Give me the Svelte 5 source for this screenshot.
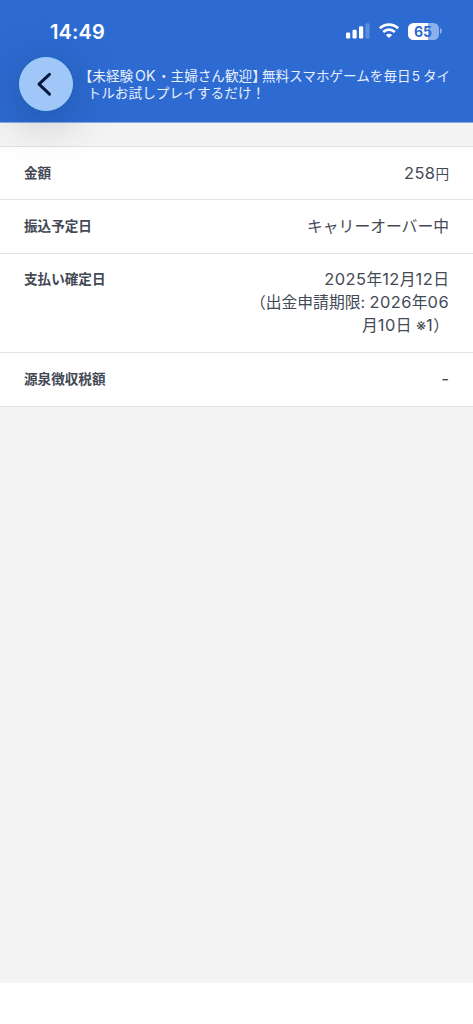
<script>
  const rows = [
    { label: '金額', lines: ['258'], unit: '円' },
    { label: '振込予定日', lines: ['キャリーオーバー中'] },
    { label: '支払い確定日', lines: ['2025年12月12日', '（出金申請期限: 2026年06', '月10日 ※1）'] },
    { label: '源泉徴収税額', lines: ['-'] }
  ];
  const split = (text) => text.match(/[\d-]+|[^\d-]+/g);
</script>

<div class="screen">
  <header>
    <div class="status">
      <span class="time">14:49</span>
      <div class="indicators">
        <svg width="24" height="16" viewBox="0 0 24 16" fill="#fff">
          <rect x="0" y="9.6" width="4.2" height="5.8" rx="1.2" />
          <rect x="6.5" y="6.8" width="4.2" height="8.6" rx="1.2" />
          <rect x="13" y="3.3" width="4.2" height="12.1" rx="1.2" />
          <rect x="19.4" y="0.3" width="4.2" height="15.1" rx="1.2" opacity=".22" />
        </svg>
        <svg class="wifi" width="20" height="16" viewBox="0 0 20 16" fill="none" stroke="#fff" stroke-width="2.7">
          <path d="M.9 5.3Q4.7 1.6 10 1.6T19.1 5.3" />
          <path d="M4.2 8.9Q6.7 6.6 10 6.6T15.8 8.9" />
          <path d="M10 14.9 6.9 11.9Q8.2 10.7 10 10.7T13.1 11.9Z" fill="#fff" stroke="none" />
        </svg>
        <div class="battery"><span>65</span></div>
        <svg class="cap" width="2" height="6" viewBox="0 0 2 6"><path d="M0 0Q2 1 2 3T0 6Z" fill="#8bb0ea" /></svg>
      </div>
    </div>
    <div class="nav">
      <button aria-label="戻る">
        <svg width="16" height="26" viewBox="0 0 16 26" fill="none" stroke="#07183f" stroke-width="3" stroke-linecap="round" stroke-linejoin="round">
          <path d="M13.5 3.3 3 13.2l10.5 9.9" />
        </svg>
      </button>
      <h1>
        <span class="half">【</span>未経験<span class="latin">OK</span>・主婦さん歓迎<span class="half close">】</span>無料スマホゲームを毎日<span class="digit">5</span>タイ<br /><span class="second">トルお試しプレイするだけ！</span>
      </h1>
    </div>
  </header>
  <main>
    <dl>
      {#each rows as row}
        <div class="row">
          <dt>{row.label}</dt>
          <dd>
            {#each row.lines as line}
              <div>{#each split(line) as part}<span class:num={/\d/.test(part)} class:dash={part === '-'}>{part}</span>{/each}{#if row.unit}<small>{row.unit}</small>{/if}</div>
            {/each}
          </dd>
        </div>
      {/each}
    </dl>
  </main>
  <footer></footer>
</div>

<style>
  :global(body) { margin: 0; }
  .screen {
    box-sizing: border-box;
    height: 1024px;
    display: flex;
    flex-direction: column;
    overflow: hidden;
    background: #f4f4f4;
    color: #434955;
    font-family: Inter, "Noto Sans CJK JP", sans-serif;
  }
  header {
    box-sizing: border-box;
    height: 123px;
    flex: none;
    background: #2d6bd3;
    border-bottom: 1px solid #86a9e5;
    color: #fff;
    position: relative;
    z-index: 1;
  }
  .status {
    display: flex;
    justify-content: space-between;
    height: 57px;
    padding: 0 31.5px 0 50px;
    box-sizing: border-box;
  }
  .time {
    margin-top: 20px;
    font-size: 20px;
    line-height: 24px;
    font-weight: 600;
    letter-spacing: .15px;
  }
  .indicators {
    display: flex;
    align-items: center;
    height: 18px;
    margin-top: 22px;
  }
  .wifi { margin: 0 9px 0 9px; }
  .battery {
    width: 31px;
    height: 17px;
    border-radius: 5.5px;
    background: linear-gradient(90deg, #fff 65%, #8bb0ea 65%);
    color: #2d6bd3;
    font-size: 14px;
    font-weight: 700;
    line-height: 17px;
    text-align: center;
  }
  .cap { margin-left: 1px; }
  .nav { display: flex; padding-left: 19px; }
  button {
    flex: none;
    width: 54px;
    height: 54px;
    padding: 0 4px 0 0;
    display: flex;
    align-items: center;
    justify-content: center;
    border: 1.5px solid #93d0f5;
    border-radius: 50%;
    background: #a1c7f8;
    box-shadow: 0 10px 50px rgba(0, 0, 0, .27);
  }
  h1 {
    margin: 10px 0 0 12.5px;
    font-size: 13.6px;
    line-height: 17px;
    font-weight: 400;
    white-space: nowrap;
    color: #e8f0fc;
  }
  .half { font-feature-settings: "halt"; }
  .close { margin-right: 3px; }
  .latin { margin: 0 1.5px 0 2px; font-size: 14.2px; }
  .digit { margin: 0 3px 0 1px; }
  .second { margin-left: 2px; letter-spacing: .08px; }
  main { flex: 1; padding-top: 23px; }
  dl { margin: 0; border-top: 1px solid #e1e2e4; background: #fff; }
  .row {
    box-sizing: border-box;
    min-height: 53.4px;
    display: flex;
    justify-content: space-between;
    padding: 14.7px 24px 14.7px;
    border-bottom: 1px solid #e1e2e4;
    line-height: 23px;
  }
  dt { font-size: 13.6px; font-weight: 700; }
  dd { margin: 0; font-size: 15.8px; text-align: right; }
  dd div { height: 23px; }
  .num { font-size: 16.4px; letter-spacing: .45px; }
  .dash { font-size: 17px; }
  small { font-size: 13.6px; line-height: 1; }
  footer { height: 41px; flex: none; background: #fff; }
</style>
